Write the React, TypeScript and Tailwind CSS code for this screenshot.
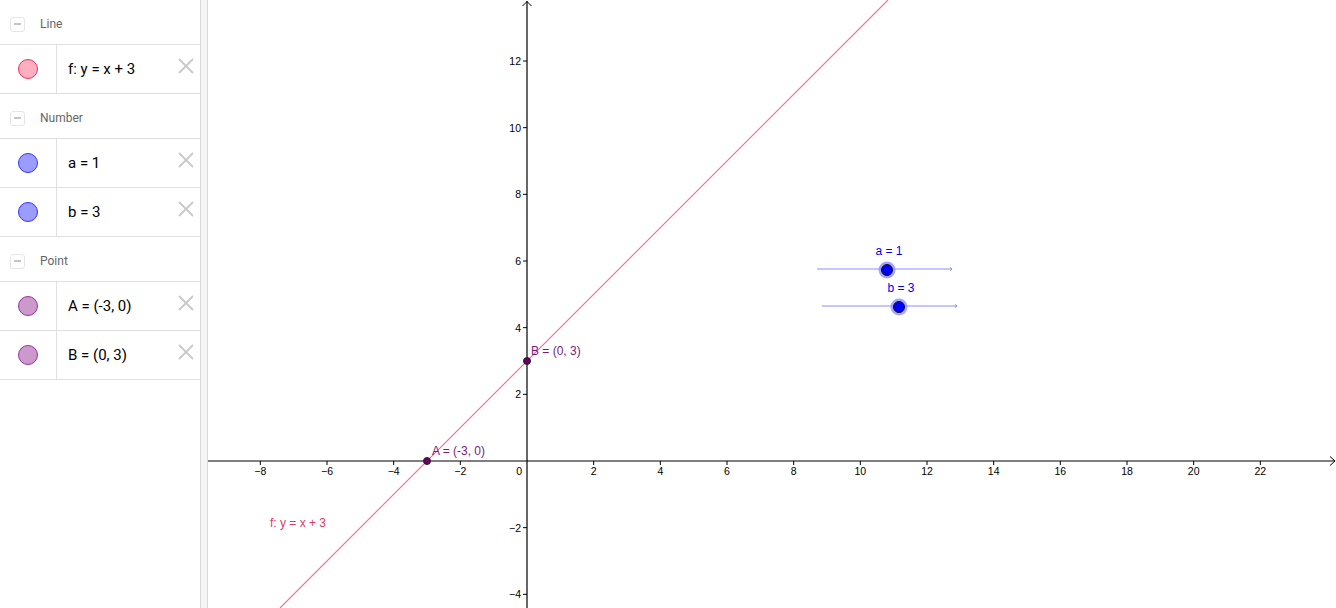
import React from "react";

type Item = { label: string; fill: string; stroke: string };
type Group = { title: string; items: Item[] };

const groups: Group[] = [
    { title: "Line", items: [{ label: "f: y = x + 3", fill: "#ffadc1", stroke: "#e8335e" }] },
    {
        title: "Number",
        items: [
            { label: "a = 1", fill: "#9c9cff", stroke: "#3434ff" },
            { label: "b = 3", fill: "#9c9cff", stroke: "#3434ff" },
        ],
    },
    {
        title: "Point",
        items: [
            { label: "A = (-3, 0)", fill: "#cc99cc", stroke: "#993399" },
            { label: "B = (0, 3)", fill: "#cc99cc", stroke: "#993399" },
        ],
    },
];

// graph origin in page pixels, one unit = 33.33px
const OX = 527;
const OY = 461;
const U = 100 / 3;
const px = (x: number) => OX + x * U;
const py = (y: number) => OY - y * U;

const Header = ({ title }: { title: string }) => (
    <div className="flex h-[45px] items-center border-b border-[#e0e0e0] pt-[4px]">
        <div className="ml-[10px] flex h-[15px] w-[15px] items-center justify-center rounded-[3px] border border-[#e6e6e6]">
            <div className="h-[1.5px] w-[7px] bg-[#c4c4c4]" />
        </div>
        <span className="ml-[15px] text-[12px] text-[#666]">{title}</span>
    </div>
);

const Row = ({ item }: { item: Item }) => (
    <div className="flex h-[49px] items-center border-b border-[#e0e0e0]">
        <div className="flex h-full w-[57px] items-center justify-center border-r border-[#e0e0e0]">
            <div
                className="h-[20px] w-[20px] rounded-full border"
                style={{ backgroundColor: item.fill, borderColor: item.stroke }}
            />
        </div>
        <span className="ml-[11px] flex-1 text-[15px] text-black">{item.label}</span>
        <svg width="18" height="18" viewBox="0 0 18 18" className="mr-[5px] -mt-[6px]">
            <path d="M2 2L16 16M16 2L2 16" stroke="#c9c9c9" strokeWidth="1.8" fill="none" />
        </svg>
    </div>
);

const Graph = () => {
    const xs = [-8, -6, -4, -2, 2, 4, 6, 8, 10, 12, 14, 16, 18, 20, 22];
    const ys = [-4, -2, 2, 4, 6, 8, 10, 12];
    const fmt = (n: number) => (n < 0 ? "\u2212" + Math.abs(n) : String(n));
    const lineX1 = -3 - (608 - OY) / U;
    const lineX2 = OY / U - 3;
    return (
        <svg
            viewBox="208 0 1128 608"
            width="1128"
            height="608"
            className="block"
            style={{ fontFamily: "'Liberation Sans', Arial, sans-serif" }}
        >
            {/* axes */}
            <line x1="208" y1={OY} x2="1335" y2={OY} stroke="#000" strokeWidth="1.2" />
            <line x1={OX} y1="1" x2={OX} y2="608" stroke="#000" strokeWidth="1.2" />
            <path d="M1330 456.5L1335 461L1330 465.5" stroke="#000" fill="none" strokeWidth="1" />
            <path d={`M${OX - 4.5} 6L${OX} 1.5L${OX + 4.5} 6`} stroke="#000" fill="none" strokeWidth="1" />
            {xs.map((x) => (
                <g key={"x" + x}>
                    <line x1={px(x)} y1={OY} x2={px(x)} y2={OY + 4} stroke="#000" />
                    <text x={px(x)} y={OY + 14} fontSize="10.5" textAnchor="middle" fill="#000">
                        {fmt(x)}
                    </text>
                </g>
            ))}
            {ys.map((y) => (
                <g key={"y" + y}>
                    <line x1={OX - 4} y1={py(y)} x2={OX} y2={py(y)} stroke="#000" />
                    <text x={OX - 6} y={py(y) + 4} fontSize="10.5" textAnchor="end" fill="#000">
                        {fmt(y)}
                    </text>
                </g>
            ))}
            <text x={OX - 5} y={OY + 14} fontSize="10.5" textAnchor="end" fill="#000">
                0
            </text>

            {/* f: y = x + 3 */}
            <line
                x1={px(lineX1)}
                y1="608"
                x2={px(lineX2)}
                y2="0"
                stroke="#f06890"
                strokeWidth="1.1"
            />
            <text x="270" y="527" fontSize="12" fill="#e0366a">
                f: y = x + 3
            </text>

            {/* points */}
            <circle cx={px(-3)} cy={OY} r="3.5" fill="#660066" stroke="#222" strokeWidth="1" />
            <text x="432" y="455" fontSize="12" fill="#7a1a7a">
                A = (-3, 0)
            </text>
            <circle cx={OX} cy={py(3)} r="3.5" fill="#660066" stroke="#222" strokeWidth="1" />
            <text x="531" y="355" fontSize="12" fill="#7a1a7a">
                B = (0, 3)
            </text>

            {/* sliders */}
            <line x1="817" y1="269" x2="952" y2="269" stroke="#8c8cff" strokeWidth="1" />
            <path d="M950 267.5L952 269L950 270.5" stroke="#8c8cff" fill="none" />
            <circle cx="887" cy="270" r="8.5" fill="#8f8fff" opacity="0.8" />
            <circle cx="887" cy="270" r="5.5" fill="#0000ff" stroke="#111" strokeWidth="1" />
            <text x="889" y="255" fontSize="12" textAnchor="middle" fill="#0000ee">
                a = 1
            </text>

            <line x1="822" y1="306" x2="957" y2="306" stroke="#8c8cff" strokeWidth="1" />
            <path d="M955 304.5L957 306L955 307.5" stroke="#8c8cff" fill="none" />
            <circle cx="899" cy="307" r="8.5" fill="#8f8fff" opacity="0.8" />
            <circle cx="899" cy="307" r="5.5" fill="#0000ff" stroke="#111" strokeWidth="1" />
            <text x="901" y="292" fontSize="12" textAnchor="middle" fill="#0000ee">
                b = 3
            </text>
        </svg>
    );
};

export default function App() {
    return (
        <div
            className="flex h-[608px] w-[1336px] overflow-hidden bg-white"
            style={{ fontFamily: "Roboto, 'Noto Sans', sans-serif" }}
        >
            <aside className="w-[200px] shrink-0">
                {groups.map((g) => (
                    <div key={g.title}>
                        <Header title={g.title} />
                        {g.items.map((it) => (
                            <Row key={it.label} item={it} />
                        ))}
                    </div>
                ))}
            </aside>
            <div className="w-[8px] shrink-0 border-x border-[#d9d9d9] bg-[#f5f5f5]" />
            <div className="flex-1">
                <Graph />
            </div>
        </div>
    );
}
